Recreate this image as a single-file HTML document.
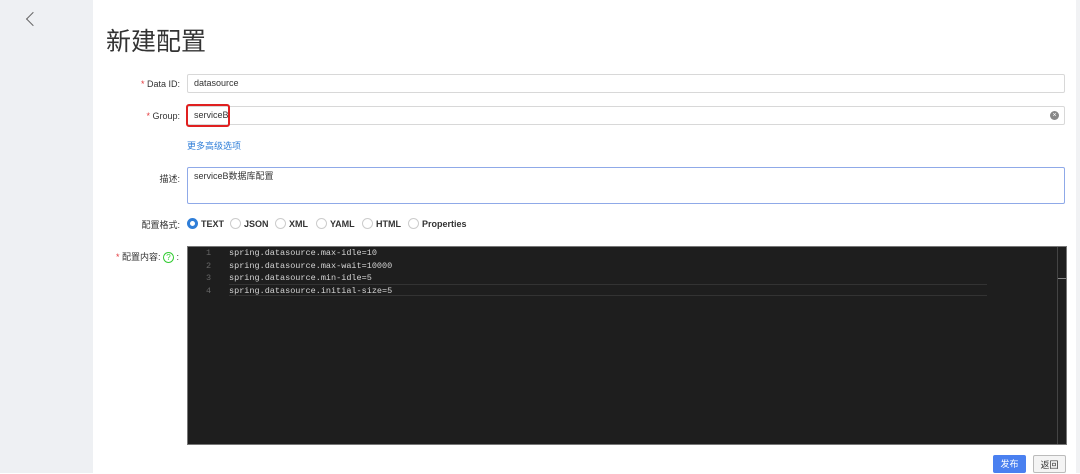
<!DOCTYPE html>
<html><head><meta charset="utf-8"><style>
*{box-sizing:border-box;margin:0;padding:0}
body{width:1080px;height:473px;overflow:hidden;background:#fff;font-family:"Liberation Sans","Noto Sans CJK SC",sans-serif;position:relative;font-size:9px;color:#333}
.side{position:absolute;left:0;top:0;width:93px;height:473px;background:#eef0f3}
.back{position:absolute;left:28px;top:14px;width:10px;height:10px;border-left:1.3px solid #666;border-bottom:1.3px solid #666;transform:rotate(45deg)}
.edge{position:absolute;right:0;top:0;width:4px;height:473px;background:#f1f2f4}
h1{position:absolute;left:106px;top:22px;font-size:25px;font-weight:normal;color:#333;font-family:"Noto Sans CJK SC",sans-serif}
.lbl{position:absolute;right:900px;font-size:9px;color:#333;white-space:nowrap}
.lbl b{color:#e4393c;font-weight:normal}
.inp{position:absolute;left:187px;width:878px;border:1px solid #d8d8d8;border-radius:2px;padding-left:6px;font-size:9px;line-height:17px;height:19px}
.red{position:absolute;left:186px;top:104px;width:44px;height:23px;border:2px solid #e02020;border-radius:3px}
.link{position:absolute;left:187px;top:139px;color:#2f7ed8;font-size:9px}
.radio{position:absolute;top:218px;left:187px;font-size:9px;font-weight:bold;color:#333}
.radio span{position:absolute;top:0;display:flex;align-items:center;gap:3px;white-space:nowrap}
.radio i{display:inline-block;width:11px;height:11px;border:1px solid #ccc;border-radius:50%}
.radio i.on{border:3px solid #2f7ed8;background:#fff}
.ed{position:absolute;left:187px;top:246px;width:880px;height:199px;background:#1e1e1e;border:1px solid #777}
.code{position:absolute;left:0;top:0;font-family:"Liberation Mono",monospace;font-size:8.5px;line-height:12.6px;color:#d4d4d4}
.code div{display:flex}
.code .n{width:41px;text-align:center;color:#666}
.hl{position:absolute;left:41px;width:758px;top:37px;height:12px;border-top:1px solid #333;border-bottom:1px solid #333}
.vs{position:absolute;right:8px;top:0;bottom:0;border-left:1px solid #444}
.btn{position:absolute;top:455px;height:18px;font-size:9px;line-height:18px;text-align:center;border-radius:2px}
</style></head><body>
<div class="side"><div class="back"></div></div>
<div class="edge"></div>
<h1>新建配置</h1>
<div class="lbl" style="top:79px"><b>*</b> Data ID:</div>
<div class="inp" style="top:74px">datasource</div>
<div class="lbl" style="top:111px"><b>*</b> Group:</div>
<div class="inp" style="top:106px">serviceB<span style="position:absolute;right:5px;top:4px;width:9px;height:9px;border-radius:50%;background:#888;color:#fff;font-size:7px;line-height:9px;text-align:center">×</span></div>
<div class="red"></div>
<div class="link">更多高级选项</div>
<div class="lbl" style="top:172px">描述:</div>
<div class="inp" style="top:167px;height:37px;border-color:#8fa9e8">serviceB数据库配置</div>
<div class="lbl" style="top:218px">配置格式:</div>
<div class="radio"><span style="left:0"><i class="on"></i>TEXT</span><span style="left:43px"><i></i>JSON</span><span style="left:88px"><i></i>XML</span><span style="left:129px"><i></i>YAML</span><span style="left:175px"><i></i>HTML</span><span style="left:221px"><i></i>Properties</span></div>
<div class="lbl" style="top:250px;right:901px"><b>*</b> 配置内容: <span style="display:inline-block;width:11px;height:11px;border:1px solid #3c3;border-radius:50%;color:#3c3;font-size:8px;line-height:9px;text-align:center">?</span> :</div>
<div class="ed">
<div class="hl"></div>
<div class="code">
<div><span class="n">1</span><span>spring.datasource.max-idle=10</span></div>
<div><span class="n">2</span><span>spring.datasource.max-wait=10000</span></div>
<div><span class="n">3</span><span>spring.datasource.min-idle=5</span></div>
<div><span class="n">4</span><span>spring.datasource.initial-size=5</span></div>
</div>
<div class="vs"></div>
<div style="position:absolute;right:0;top:31px;width:8px;border-top:1px solid #888"></div>
</div>
<div class="btn" style="left:993px;width:33px;background:#4a80f0;color:#fff">发布</div>
<div class="btn" style="left:1033px;width:33px;border:1px solid #bbb;background:#f4f4f4;color:#333">返回</div>
</body></html>
